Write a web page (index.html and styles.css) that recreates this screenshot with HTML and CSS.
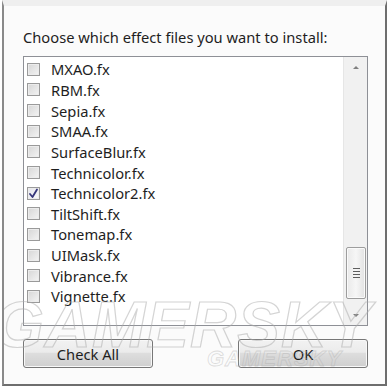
FILE: index.html
```html
<!DOCTYPE html>
<html lang="en">
<head>
    <meta charset="UTF-8">
    <title>Install effects</title>
    <link rel="stylesheet" href="styles.css">
</head>
<body>
    <div class="dialog">
        <p class="prompt">Choose which effect files you want to install:</p>

        <div class="listbox">
            <ul class="files">
                <li><span class="check"></span>MXAO.fx</li>
                <li><span class="check"></span>RBM.fx</li>
                <li><span class="check"></span>Sepia.fx</li>
                <li><span class="check"></span>SMAA.fx</li>
                <li><span class="check"></span>SurfaceBlur.fx</li>
                <li><span class="check"></span>Technicolor.fx</li>
                <li><span class="check checked">
                    <svg width="11" height="11" viewBox="0 0 11 11"><path d="M2 6 L4.5 9 L9 1.5" fill="none" stroke="#35357a" stroke-width="1.8" stroke-linecap="round" stroke-linejoin="round"/></svg>
                </span>Technicolor2.fx</li>
                <li><span class="check"></span>TiltShift.fx</li>
                <li><span class="check"></span>Tonemap.fx</li>
                <li><span class="check"></span>UIMask.fx</li>
                <li><span class="check"></span>Vibrance.fx</li>
                <li><span class="check"></span>Vignette.fx</li>
            </ul>

            <!-- vertical scrollbar, thumb near the bottom -->
            <div class="scrollbar">
                <div class="arrow up"></div>
                <div class="track">
                    <div class="thumb">
                        <span class="grip"></span>
                        <span class="grip"></span>
                        <span class="grip"></span>
                        <span class="grip"></span>
                    </div>
                </div>
                <div class="arrow down"></div>
            </div>
        </div>

        <div class="buttons">
            <button class="btn">Check All</button>
            <button class="btn">OK</button>
        </div>

        <div class="watermark">GAMERSKY</div>
        <div class="watermark small">GAMERSKY</div>
    </div>
</body>
</html>
```

FILE: styles.css
```css
body {
    margin: 0;
    padding: 0;
    background: #fff;
    font-family: "Noto Sans", "Open Sans", sans-serif;
}

.dialog {
    position: relative;
    box-sizing: border-box;
    width: 385px;
    height: 386px;
    margin-left: 2px;
    padding: 21px 17px 0 19px;
    background: #fbfbfb;
    border-left: 2px solid #8a8a8a;
    border-right: 2px solid #6e6e6e;
    border-bottom: 2px solid #6e6e6e;
    border-top: 6px solid #efefef;
    overflow: hidden;
}

.prompt {
    margin: 0;
    font-size: 14.7px;
    line-height: 20px;
    color: #1e1e1e;
}

/* file list */
.listbox {
    display: flex;
    margin-top: 9px;
    height: 270px;
    box-sizing: border-box;
    border: 1px solid #8e9096;
    background: #fff;
}

.files {
    flex: 1;
    list-style: none;
    margin: 0;
    padding: 2px 0 0 3px;
}

.files li {
    display: flex;
    align-items: center;
    height: 20.65px;
    font-size: 14.7px;
    color: #1e1e1e;
}

.check {
    display: flex;
    align-items: center;
    justify-content: center;
    width: 11px;
    height: 11px;
    margin-right: 11px;
    border: 1px solid #9a9a9a;
    background: linear-gradient(135deg, #d6d6d6, #f4f4f4);
    box-shadow: inset 0 0 0 1px #ececec;
}

.check.checked {
    background: linear-gradient(135deg, #e4e4ec, #fafafa);
}

.scrollbar {
    width: 23px;
    display: flex;
    flex-direction: column;
    background: #f1f1f1;
    border-left: 1px solid #e6e6e6;
}

.arrow {
    height: 20px;
    display: flex;
    align-items: center;
    justify-content: center;
}

.arrow::after {
    content: "";
    border-left: 3px solid transparent;
    border-right: 3px solid transparent;
}

.arrow.up::after {
    border-bottom: 3px solid #808080;
}

.arrow.down::after {
    border-top: 3px solid #808080;
}

.track {
    flex: 1;
    display: flex;
    flex-direction: column;
    justify-content: flex-end;
    padding: 0 1px 6px 2px;
}

.thumb {
    height: 50px;
    border: 1px solid #9d9d9d;
    border-radius: 2px;
    background: linear-gradient(90deg, #e9e9e9, #f6f6f6 50%, #e2e2e2);
    box-shadow: inset 0 0 0 1px #fafafa;
    display: flex;
    flex-direction: column;
    align-items: center;
    justify-content: center;
    gap: 2px;
}

.grip {
    width: 7px;
    height: 1px;
    background: #5e5e5e;
}

/* buttons */
.buttons {
    display: flex;
    justify-content: space-between;
    margin-top: 13px;
}

.btn {
    width: 130px;
    height: 29px;
    border: 1px solid #777;
    border-radius: 3px;
    background: linear-gradient(#f2f2f2, #ebebeb 45%, #dddddd 50%, #cfcfcf);
    box-shadow: inset 0 0 0 1px #f8f8f8;
    font-family: "Noto Sans", "Open Sans", sans-serif;
    font-size: 14.7px;
    color: #1e1e1e;
    padding: 0;
}

/* outlined watermark over the lower part */
.watermark {
    position: absolute;
    left: -10px;
    top: 282px;
    font-family: "Liberation Sans", sans-serif;
    font-size: 64px;
    font-weight: bold;
    font-style: italic;
    letter-spacing: 1px;
    color: transparent;
    -webkit-text-stroke: 1.2px rgba(170, 170, 170, 0.5);
    pointer-events: none;
}

.watermark.small {
    left: 203px;
    top: 340px;
    font-size: 22px;
    letter-spacing: 1px;
    -webkit-text-stroke: 0.8px rgba(170, 170, 170, 0.4);
}
```
